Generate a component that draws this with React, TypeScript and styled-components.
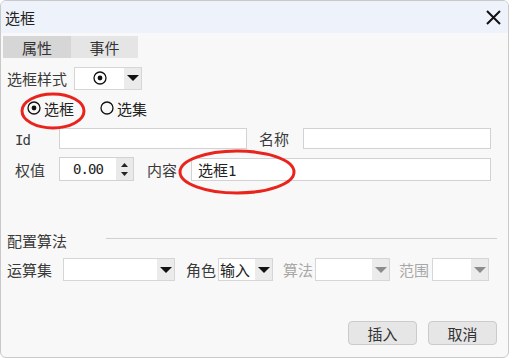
import styled, { createGlobalStyle } from "styled-components";

const Global = createGlobalStyle`
  html, body {
    margin: 0;
    background: #ffffff;
  }
  body {
    font-family: "Noto Sans CJK SC", "Liberation Sans", sans-serif;
    font-size: 15px;
    color: #333;
  }
`;

const Dialog = styled.div`
  position: relative;
  box-sizing: border-box;
  width: 509px;
  height: 358px;
  border: 1px solid #c9c9c9;
  border-radius: 6px;
  background: #f8f8f8;
  display: flex;
  flex-direction: column;
  overflow: hidden;
`;

const TitleBar = styled.div`
  height: 32px;
  background: #eef3fb;
  display: flex;
  align-items: center;
  justify-content: space-between;
  padding: 0 6px 0 4px;
  color: #222;
  font-size: 15px;
`;

const CloseButton = styled.button`
  border: 0;
  background: none;
  padding: 0;
  width: 18px;
  height: 18px;
  display: flex;
  align-items: center;
  justify-content: center;
`;

const TabBar = styled.div`
  display: flex;
  margin: 3px 0 0 2px;
  height: 22px;
`;

const Tab = styled.div<{ $active?: boolean }>`
  width: ${(p) => (p.$active ? 68 : 67)}px;
  display: flex;
  align-items: center;
  justify-content: center;
  background: ${(p) => (p.$active ? "#d6d6d6" : "#e5e5e5")};
  color: #333;
`;

const Row = styled.div<{ $top: number; $h?: number; $left?: number }>`
  display: flex;
  align-items: center;
  margin-top: ${(p) => p.$top}px;
  height: ${(p) => p.$h ?? 22}px;
  padding-left: ${(p) => p.$left ?? 0}px;
`;

const Label = styled.span<{ $gap?: number; $disabled?: boolean }>`
  margin-left: ${(p) => p.$gap ?? 0}px;
  color: ${(p) => (p.$disabled ? "#a8a8a8" : "#3a3a3a")};
  white-space: nowrap;
  line-height: 1;
`;

const FieldLabel = styled.span`
  box-sizing: border-box;
  width: 58px;
  padding-left: 14px;
  color: #3a3a3a;
`;

const Mono = styled.span`
  font-family: "DejaVu Sans Mono", "Liberation Mono", monospace;
  font-size: 14px;
  letter-spacing: -0.9px;
`;

const Input = styled.div<{ $w: number; $gap?: number; $h?: number }>`
  box-sizing: border-box;
  width: ${(p) => p.$w}px;
  height: ${(p) => p.$h ?? 21}px;
  margin-left: ${(p) => p.$gap ?? 0}px;
  background: #fff;
  border: 1px solid #d2d2d2;
  display: flex;
  align-items: center;
  padding-left: 6px;
  color: #222;
`;

const Combo = styled.div<{ $w: number; $gap?: number }>`
  box-sizing: border-box;
  display: flex;
  width: ${(p) => p.$w}px;
  height: 23px;
  margin-left: ${(p) => p.$gap ?? 0}px;
  border: 1px solid #d6d6d6;
`;

const ComboField = styled.div<{ $center?: boolean }>`
  flex: 1;
  background: #fff;
  display: flex;
  align-items: center;
  justify-content: ${(p) => (p.$center ? "center" : "flex-start")};
  padding-left: ${(p) => (p.$center ? 0 : 1)}px;
  color: #222;
`;

const ArrowBox = styled.div`
  width: 17px;
  background: #ebebeb;
  display: flex;
  align-items: center;
  justify-content: center;
`;

const RadioItem = styled.label<{ $gap?: number }>`
  display: flex;
  align-items: center;
  gap: 3px;
  margin-left: ${(p) => p.$gap ?? 0}px;
  color: #222;
`;

const Spin = styled.div`
  box-sizing: border-box;
  display: flex;
  width: 75px;
  height: 24px;
  border: 1px solid #d2d2d2;
`;

const SpinField = styled.div`
  flex: 1;
  background: #fff;
  display: flex;
  align-items: center;
  justify-content: center;
  color: #222;
`;

const SpinButtons = styled.div`
  width: 17px;
  background: #e9e9e9;
  display: flex;
  flex-direction: column;
  align-items: center;
  justify-content: center;
  gap: 5px;
`;

const Divider = styled.div`
  flex: 1;
  height: 1px;
  background: #cfcfcf;
  margin: 0 11px 3px 39px;
`;

const Footer = styled.div`
  margin-top: auto;
  display: flex;
  justify-content: flex-end;
  gap: 11px;
  padding: 0 11px 12px 0;
`;

const Button = styled.button`
  box-sizing: border-box;
  width: 69px;
  height: 24px;
  border: 1px solid #cbcbcb;
  border-radius: 4px;
  background: #e6e6e6;
  font-family: inherit;
  font-size: 15px;
  color: #333;
  padding: 0;
`;

const Marks = styled.svg`
  position: absolute;
  left: -1px;
  top: -1px;
  pointer-events: none;
`;

const Arrow = ({ color = "#111" }: { color?: string }) => (
  <svg width="12" height="6" viewBox="0 0 12 6">
    <polygon points="0,0 12,0 6,6" fill={color} />
  </svg>
);

const Radio = ({ checked }: { checked?: boolean }) => (
  <svg width="14" height="14" viewBox="0 0 14 14">
    <circle cx="7" cy="7" r="6" fill="none" stroke="#111" strokeWidth="1.3" />
    {checked && <circle cx="7" cy="7" r="2.4" fill="#111" />}
  </svg>
);

export default function App() {
  return (
    <>
      <Global />
      <Dialog>
        <TitleBar>
          <span>选框</span>
          <CloseButton>
            <svg width="15" height="15" viewBox="0 0 15 15">
              <path d="M1 1 L14 14 M14 1 L1 14" stroke="#111" strokeWidth="2" />
            </svg>
          </CloseButton>
        </TitleBar>

        <TabBar>
          <Tab $active>属性</Tab>
          <Tab>事件</Tab>
        </TabBar>

        <Row $top={9} $left={6}>
          <Label>选框样式</Label>
          <Combo $w={68} $gap={7}>
            <ComboField $center>
              <Radio checked />
            </ComboField>
            <ArrowBox>
              <Arrow />
            </ArrowBox>
          </Combo>
        </Row>

        <Row $top={9} $h={20} $left={26}>
          <RadioItem>
            <Radio checked />
            选框
          </RadioItem>
          <RadioItem $gap={26}>
            <Radio />
            选集
          </RadioItem>
        </Row>

        <Row $top={9} $left={0}>
          <FieldLabel>
            <Mono>Id</Mono>
          </FieldLabel>
          <Input $w={188} />
          <Label $gap={12}>名称</Label>
          <Input $w={188} $gap={14} />
        </Row>

        <Row $top={8} $h={24} $left={0}>
          <FieldLabel>权值</FieldLabel>
          <Spin>
            <SpinField>
              <Mono>0.00</Mono>
            </SpinField>
            <SpinButtons>
              <svg width="7" height="4" viewBox="0 0 7 4">
                <polygon points="0,4 7,4 3.5,0" fill="#222" />
              </svg>
              <svg width="7" height="4" viewBox="0 0 7 4">
                <polygon points="0,0 7,0 3.5,4" fill="#222" />
              </svg>
            </SpinButtons>
          </Spin>
          <Label $gap={13}>内容</Label>
          <Input $w={300} $h={23} $gap={14}>
            <span>
              选框<Mono>1</Mono>
            </span>
          </Input>
        </Row>

        <Row $top={50} $h={18} $left={6}>
          <Label>配置算法</Label>
          <Divider />
        </Row>

        <Row $top={9} $h={23} $left={6}>
          <Label>运算集</Label>
          <Combo $w={112} $gap={11}>
            <ComboField />
            <ArrowBox>
              <Arrow />
            </ArrowBox>
          </Combo>
          <Label $gap={11}>角色</Label>
          <Combo $w={55} $gap={2}>
            <ComboField>输入</ComboField>
            <ArrowBox>
              <Arrow />
            </ArrowBox>
          </Combo>
          <Label $gap={10} $disabled>
            算法
          </Label>
          <Combo $w={75} $gap={2}>
            <ComboField />
            <ArrowBox>
              <Arrow color="#8c8c8c" />
            </ArrowBox>
          </Combo>
          <Label $gap={9} $disabled>
            范围
          </Label>
          <Combo $w={57} $gap={3}>
            <ComboField />
            <ArrowBox>
              <Arrow color="#8c8c8c" />
            </ArrowBox>
          </Combo>
        </Row>

        <Footer>
          <Button>插入</Button>
          <Button>取消</Button>
        </Footer>

        <Marks width="509" height="358">
          <ellipse cx="53" cy="111" rx="31" ry="17" fill="none" stroke="#e8241c" strokeWidth="3" />
          <ellipse cx="237" cy="172" rx="57" ry="21" fill="none" stroke="#e8241c" strokeWidth="3" />
        </Marks>
      </Dialog>
    </>
  );
}
